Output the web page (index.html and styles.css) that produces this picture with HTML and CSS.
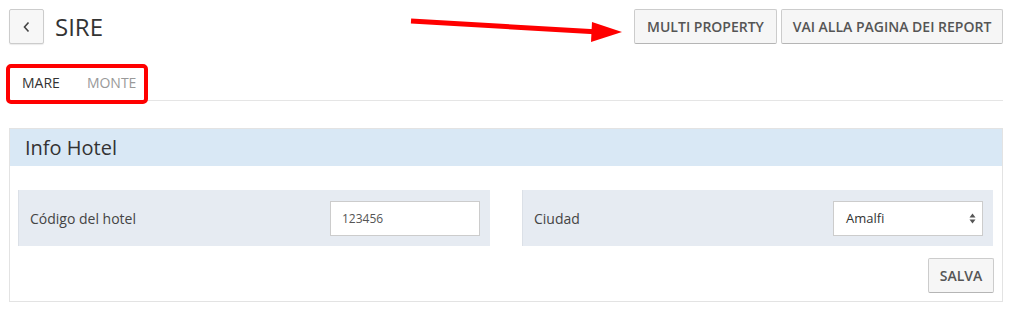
FILE: index.html
```html
<!DOCTYPE html>
<html lang="it">
<head>
<meta charset="utf-8">
<title>SIRE</title>
<link rel="stylesheet" href="styles.css">
</head>
<body>
<div class="page">
  <header class="topbar">
    <div class="title-group">
      <button class="back-btn" type="button" aria-label="Indietro">
        <svg width="10" height="14" viewBox="0 0 10 14"><path d="M6.5 2.5 L2.5 7 L6.5 11.5" fill="none" stroke="#444" stroke-width="1.6"/></svg>
      </button>
      <h1 class="title">SIRE</h1>
    </div>
    <div class="actions">
      <button class="btn" type="button">MULTI PROPERTY</button>
      <button class="btn" type="button">VAI ALLA PAGINA DEI REPORT</button>
    </div>
    <svg class="arrow" width="230" height="30" viewBox="0 0 230 30">
      <line x1="2" y1="3" x2="190" y2="14" stroke="#f00" stroke-width="5"/>
      <polygon points="183,4 213,14 182,24" fill="#f00"/>
    </svg>
  </header>

  <nav class="tabs">
    <span class="tab active">MARE</span>
    <span class="tab">MONTE</span>
    <span class="highlight"></span>
  </nav>

  <section class="panel">
    <div class="panel-head">Info Hotel</div>
    <div class="panel-body">
      <div class="fields">
        <div class="field">
          <label class="label">Código del hotel</label>
          <input class="control" type="text" value="123456">
        </div>
        <div class="field">
          <label class="label">Ciudad</label>
          <div class="control select">
            <span>Amalfi</span>
            <svg width="7" height="11" viewBox="0 0 7 11"><path d="M3.5 0.5 L6.5 4.5 L0.5 4.5 Z M3.5 10.5 L6.5 6.5 L0.5 6.5 Z" fill="#555"/></svg>
          </div>
        </div>
      </div>
      <div class="footer">
        <button class="btn btn-save" type="button">SALVA</button>
      </div>
    </div>
  </section>
</div>
</body>
</html>
```

FILE: styles.css
```css
* { box-sizing: border-box; }
html, body { margin: 0; padding: 0; background: #fff; }
body {
  font-family: "Open Sans", "Liberation Sans", sans-serif;
  color: #333;
}
.page { padding: 9px 7px 0 9px; }

.topbar {
  position: relative;
  display: flex;
  justify-content: space-between;
  align-items: flex-start;
  height: 35px;
}
.title-group { display: flex; align-items: center; gap: 11px; }
.back-btn {
  width: 35px; height: 35px;
  border: 1px solid #ccc;
  background: #f7f7f7;
  border-radius: 2px;
  display: flex; align-items: center; justify-content: center;
  padding: 0;
  box-shadow: 0 1px 1px rgba(0,0,0,0.08);
}
.title {
  margin: 0;
  font-size: 24px;
  font-weight: 400;
  color: #333;
  line-height: 35px;
}
.actions { display: flex; gap: 4px; }
.btn {
  font-family: "Open Sans", "Liberation Sans", sans-serif;
  height: 35px;
  padding: 0;
  font-size: 14px;
  font-weight: 600;
  color: #555;
  background: #f6f6f6;
  border: 1px solid #ccc;
  border-bottom-color: #b5b5b5;
  border-radius: 2px;
}
.actions .btn:first-child { width: 143px; }
.actions .btn:last-child { width: 222px; }

.arrow {
  position: absolute;
  left: 400px;
  top: 9px;
}

.tabs {
  position: relative;
  display: flex;
  margin-top: 21px;
  height: 36px;
  border-bottom: 1px solid #e5e5e5;
  padding-left: 4px;
}
.tab {
  font-size: 14px;
  color: #999;
  padding: 8px 9px 0;
  line-height: 20px;
}
.tab.active { color: #333; padding-right: 18px; }
.highlight {
  position: absolute;
  left: -3px; top: -1px;
  width: 142px; height: 40px;
  border: 4px solid #f00;
  border-radius: 5px;
}

.panel {
  margin-top: 27px;
  border: 1px solid #e3e3e3;
}
.panel-head {
  height: 37px;
  background: #d9e8f5;
  font-size: 20px;
  color: #333;
  padding-left: 15px;
  line-height: 37px;
}
.panel-body { padding: 24px 8px 8px 8px; }
.fields {
  display: grid;
  grid-template-columns: 472px 471px;
  column-gap: 32px;
}
.field {
  height: 56px;
  background: #e6ebf2;
  border-left: 1px solid #dbe0e7;
  display: flex;
  align-items: center;
  justify-content: space-between;
  padding: 0 10px 0 11px;
}
.label { font-size: 14px; color: #444; }
.control {
  width: 150px; height: 35px;
  border: 1px solid #ccc;
  background: #fff;
  font-family: "Open Sans", "Liberation Sans", sans-serif;
  font-size: 12px;
  color: #555;
  padding: 0 11px;
}
.select {
  display: flex;
  align-items: center;
  justify-content: space-between;
  font-size: 13px;
  color: #333;
  padding: 0 6px 0 12px;
}
.footer {
  display: flex;
  justify-content: flex-end;
  margin-top: 12px;
}
.btn-save { width: 66px; }
```
